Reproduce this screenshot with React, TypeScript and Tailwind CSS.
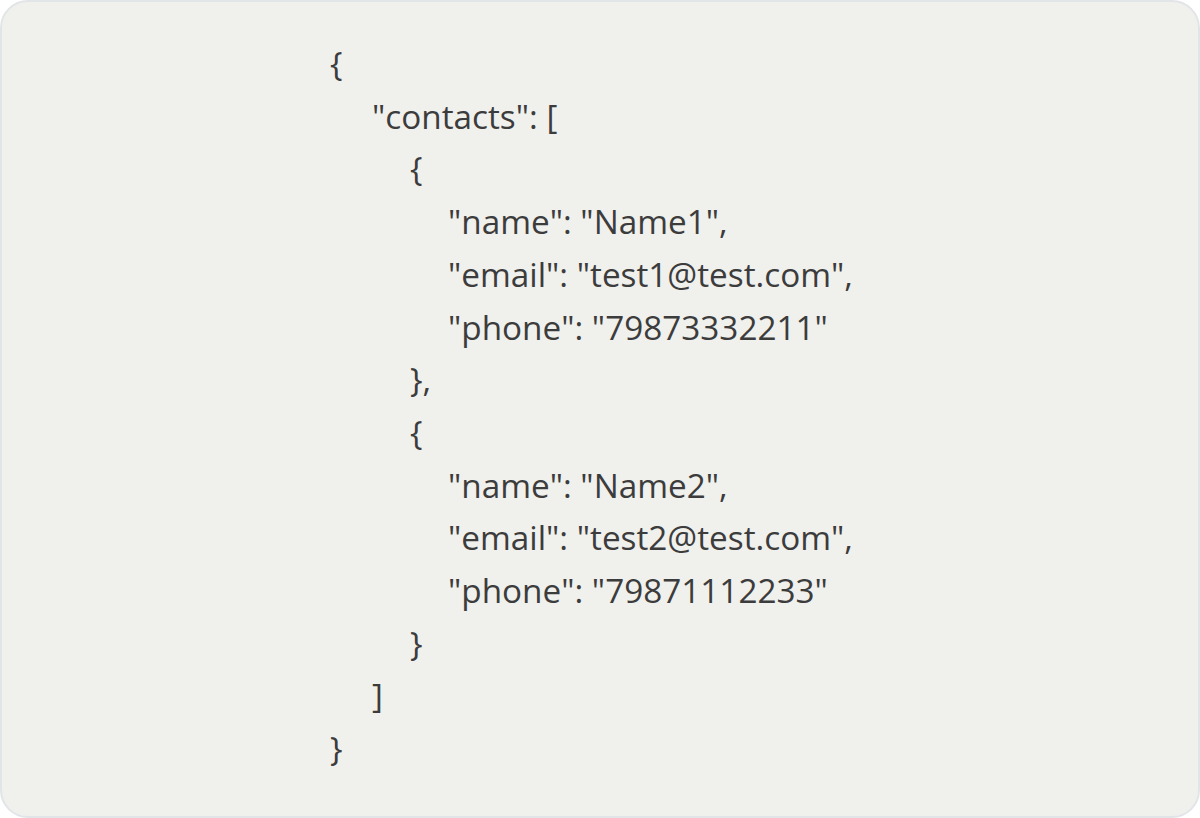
const lines: [number, string][] = [
  [0, "{"],
  [1, "\"contacts\": ["],
  [2, "{"],
  [3, "\"name\": \"Name1\","],
  [3, "\"email\": \"test1@test.com\","],
  [3, "\"phone\": \"79873332211\""],
  [2, "},"],
  [2, "{"],
  [3, "\"name\": \"Name2\","],
  [3, "\"email\": \"test2@test.com\","],
  [3, "\"phone\": \"79871112233\""],
  [2, "}"],
  [1, "]"],
  [0, "}"],
];

const indent = ["pl-0", "pl-[42px]", "pl-[80px]", "pl-[118px]"];

export default function App() {
  return (
    <div className="h-[818px] w-[1200px] bg-white">
      <div className="h-full w-full rounded-[28px] border-2 border-[#e2e5e8] bg-[#f0f0ed] pl-[328px] pt-[35px] font-['Open_Sans',sans-serif] text-[33.3px] leading-[52.7px] text-[#3c3c3c]">
        {lines.map(([lvl, text], i) => (
          <div key={i} className={`whitespace-pre ${indent[lvl]}`}>
            {text}
          </div>
        ))}
      </div>
    </div>
  );
}
